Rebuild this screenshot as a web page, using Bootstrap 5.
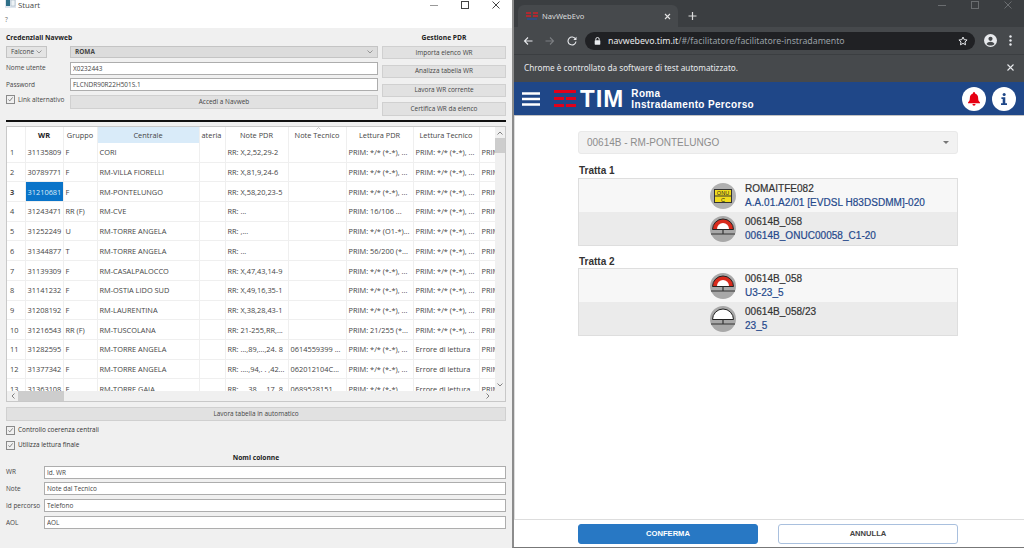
<!DOCTYPE html>
<html lang="it">
  <head>
    <meta charset="UTF-8" />
    <meta name="viewport" content="width=device-width, initial-scale=1.0" />
    <title>Stuart e NavWebEvo</title>

    <link
      rel="stylesheet"
      href="https://cdn.jsdelivr.net/npm/bootstrap@5.3.0/dist/css/bootstrap.min.css"
    />

    <style>
      html, body { height: 548px; overflow: hidden; }
      body { background: #fff; }
      .screen { width: 1024px; height: 548px; }

      /* Finestra Stuart (Qt) */
      .qt-win { width: 512px; height: 548px; font: 6.45px/10px "Open Sans", sans-serif; color: #333; background: #f0f0f0; }
      .qt-title { height: 10px; background: #fff; font-size: 7.8px; color: #444; padding-left: 18px; padding-right: 12px; }
      .qt-app-icon { margin-left: -13px; margin-right: 2px; margin-top: -3px; }
      .qt-winbtns { gap: 23px; }
      .qt-menu { height: 18px; background: #fff; padding-left: 5px; padding-top: 2px; color: #666; }
      .qt-body { padding: 5px 6px 0; }
      .qt-left { width: 372px; }
      .qt-right { width: 124px; margin-left: 4px; }
      .qt-head { height: 10px; font-size: 6.7px; font-weight: 700; color: #222; margin-bottom: 3px; }
      .qt-rows { gap: 3.6px; }
      .qt-label { width: 64px; flex: none; color: #444; }
      .qt-label-up { margin-top: -4px; }
      .qt-combo { height: 12px; background: #dcdcdc; border: 1px solid #c4c4c4; padding: 0 4px; color: #444; }
      .qt-combo-short { width: 41px; margin-right: 23px; background: #e4e4e4; }
      .qt-input.form-control { height: 13px; min-height: 0; padding: 0 2px; font: inherit; color: #444; border: 1px solid #adadad; border-radius: 0; background: #fff; box-shadow: none; }
      .qt-btn.btn { height: 14px; padding: 0; font: inherit; color: #444; background: #e1e1e1; border: 1px solid #d0d0d0; border-radius: 0; }
      .qt-btns { gap: 5.6px; margin-top: 1px; }
      .qt-btns .qt-btn.btn { height: 13.2px; }
      .qt-rule { height: 2px; background: #111; margin: 4px 0; }
      .qt-check.form-check-input { width: 9px; height: 9px; margin: 0 3px 0 0; border: 1px solid #8a8a8a; border-radius: 0; background-color: #f0f0f0; box-shadow: none; float: none; flex: none;
        background-image: url("data:image/svg+xml,%3csvg xmlns='http://www.w3.org/2000/svg' viewBox='0 0 10 10'%3e%3cpath fill='none' stroke='%23555' stroke-width='1' d='M2 5l2 2 4-5'/%3e%3c/svg%3e"); }

      /* Griglia WR */
      .grid-frame { height: 276px; border: 1px solid #c8c8c8; background: #fff; }
      .grid-view { height: 264px; overflow: hidden; }
      .wr-grid.table { width: 488px; table-layout: fixed; margin: 0; font: 7.4px/10px "Open Sans", sans-serif; --bs-table-bg: #fff; --bs-table-color: #444; }
      .wr-grid th, .wr-grid td { padding: 0 2px; white-space: nowrap; overflow: hidden; vertical-align: middle; border: 0; border-right: 1px solid #efefef; border-bottom: 1px solid #efefef; }
      .wr-grid thead th { height: 16px; font-weight: 400; text-align: center; border-bottom: 0; }
      .wr-grid tbody td, .wr-grid tbody th { height: 19.7px; }
      .wr-grid tbody th { font-weight: 400; padding-left: 3px; }
      .wr-grid .cell-sel { background: #0a74c9; --bs-table-bg: #0a74c9; --bs-table-color: #fff; color: #dcecf8; }
      .wr-grid thead .col-active { --bs-table-bg: #d9ebf9; background: #d9ebf9; }
      .wr-grid .row-current { font-weight: 700; }
      .wr-grid thead .col-key { font-weight: 700; color: #222; }
      .sort-mark { position: absolute; left: 309px; top: 0; }
      .c-h { width: 18px; } .c-wr { width: 38px; } .c-gr { width: 34px; } .c-ce { width: 102px; }
      .c-at { width: 26px; } .c-np { width: 63px; } .c-nt { width: 58px; } .c-lp { width: 67px; }
      .c-lt { width: 66px; } .c-pr { width: 16px; }
      .sb-v { width: 10px; background: #f0f0f0; color: #555; }
      .sb-thumb-v { height: 15px; margin-top: 3px; background: #cdcdcd; }
      .sb-h { height: 10px; background: #f0f0f0; }
      .sb-thumb-h { width: 46px; background: #cdcdcd; }
      .sb-left { width: 11px; }
      .sb-right { margin-right: 15px; }
      .qt-auto.btn { width: 100%; margin-top: 5px; margin-bottom: 2px; height: 14px; }
      .qt-optrow { height: 15px; }
      .qt-center-head { height: 10px; margin-top: 0; margin-bottom: 3px; font-size: 6.7px; font-weight: 700; color: #222; }
      .qt-fields { gap: 3.9px; }
      .qt-field-label { width: 38px; flex: none; color: #444; }

      /* Finestra Chrome */
      .cr-win { width: 512px; height: 548px; border-left: 2px solid #8c8c8c; border-bottom: 1px solid #777; background: #fff; font-family: "Liberation Sans", sans-serif; }
      .cr-strip { height: 27px; background: #3b3e41; padding: 5px 0 0 4px; color: #ddd; }
      .cr-tab { width: 160px; height: 22px; background: #46494c; border-radius: 6px 6px 0 0; padding: 0 7px 0 8px; font: 7.6px "Noto Sans", sans-serif; color: #dcdcdc; }
      .cr-plus { margin-left: 10px; margin-top: -1px; }
      .cr-ctrl { gap: 25px; margin-left: auto; margin-right: 12px; margin-top: -4px; }
      .cr-bar { height: 27px; background: #46494c; padding: 0 12px 0 9px; }
      .cr-nav { gap: 12px; width: 60px; }
      .cr-omni { flex: 1; height: 18px; margin: 0 9px 0 2px; background: #202124; border-radius: 9px; padding: 0 7px 0 9px; font: 8.75px "Noto Sans", sans-serif; color: #9aa0a6; }
      .cr-omni b { font-weight: 400; color: #e8eaed; }
      .cr-lock { margin-right: 7px; }
      .cr-tools { gap: 12px; margin-left: 0; }
      .cr-info { height: 28px; background: #46494c; border-top: 1px solid #3b3e41; padding: 0 10px 2px; font: 8.2px "Noto Sans", sans-serif; color: #e8eaed; }
      .tim-head { height: 34px; background: #1f4788; border-bottom: 1px solid #c2c2c2; padding: 0 8px 0 8px; color: #fff; }
      .tim-logo { margin-left: 14px; margin-right: 0; }
      .tim-word { font: 700 24px/1 "Liberation Sans", sans-serif; letter-spacing: 1px; margin-left: 4px; margin-right: 7px; }
      .tim-title { font: 700 10px/10.5px "Liberation Sans", sans-serif; letter-spacing: .35px; margin-top: 2px; }
      .tim-round { width: 24px; height: 24px; border-radius: 50%; background: #fff; margin-left: 6px; }
      .tim-main { flex: 1; padding: 15px 66px 0 63px; border-left: 1px solid #ddd; }
      .tim-select { height: 23px; background: #f2f2f2; border: 1px solid #e9e9e9; border-radius: 3px; padding: 0 8px; font-size: 10px; color: #8d8d8d; }
      .tim-caret { width: 0; height: 0; border: 3px solid transparent; border-top-color: #777; border-bottom: 0; }
      .tim-tratta { font-size: 10px; font-weight: 700; color: #333; height: 12px; line-height: 12px; margin: 11px 0 1px 1px; }
      .tim-tratta-2 { margin-top: 10px; margin-bottom: 0; }
      .tim-box { border: 1px solid #dedede; }
      .tim-row { height: 33px; padding-left: 131px; gap: 9px; background: #f7f7f7; font-size: 10px; line-height: 14px; color: #333; -webkit-text-stroke: .2px; letter-spacing: .04px; }
      .tim-row:nth-child(even) { background: #ebebeb; }
      .tim-link { color: #25498c; }
      .tim-foot { height: 28px; border-top: 1px solid #ddd; padding: 4px 64px 0 64px; gap: 20px; }
      .tim-btn.btn { width: 180px; height: 20px; padding: 0; font: 700 7.6px/1 "Liberation Sans", sans-serif; border-radius: 3px; }
      .tim-ok.btn { background: #2878c4; border: 1px solid #2878c4; color: #fff; }
      .tim-ko.btn { background: #fff; border: 1px solid #a9c0de; color: #444; }
    </style>
  </head>
  <body>
    <div class="screen d-flex">
      <!-- Stuart -->
      <div class="qt-win d-flex flex-column">
        <div class="qt-title d-flex align-items-center">
          <svg class="qt-app-icon" width="11" height="9" viewBox="0 0 11 9"><rect width="11" height="9" fill="#dfe6ee"/><rect x="1" y="0" width="4" height="7" fill="#2e6f88"/><rect x="6" y="1" width="4" height="6" fill="#eef3f6" stroke="#9ab" stroke-width=".5"/></svg>
          <span>Stuart</span>
          <div class="qt-winbtns d-flex align-items-center ms-auto">
            <svg width="8" height="8" viewBox="0 0 8 8"><path d="M0 4.500h8" stroke="#999" fill="none"/></svg>
            <svg width="8" height="8" viewBox="0 0 8 8"><rect x=".5" y=".5" width="7" height="7" stroke="#444" fill="none"/></svg>
            <svg width="8" height="8" viewBox="0 0 8 8"><path d="M.5.5l7 7M7.500.5l-7 7" stroke="#444" fill="none"/></svg>
          </div>
        </div>
        <div class="qt-menu d-flex align-items-center">?</div>
        <div class="qt-body flex-grow-1 d-flex flex-column">
          <div class="d-flex">
            <div class="qt-left">
              <div class="qt-head">Credenziali Navweb</div>
              <div class="qt-rows d-flex flex-column">
                <div class="d-flex">
                  <div class="qt-combo qt-combo-short d-flex align-items-center justify-content-between">Falcone
                    <svg width="6" height="4" viewBox="0 0 6 4"><path d="M.5.5L3 3 5.500.5" stroke="#777" fill="none" stroke-width=".7"/></svg>
                  </div>
                  <div class="qt-combo flex-grow-1 d-flex align-items-center justify-content-between fw-bold">ROMA
                    <svg width="6" height="4" viewBox="0 0 6 4"><path d="M.5.5L3 3 5.500.5" stroke="#777" fill="none" stroke-width=".7"/></svg>
                  </div>
                </div>
                <div class="d-flex align-items-center"><span class="qt-label">Nome utente</span><input class="form-control qt-input" type="text" value="X0232443" /></div>
                <div class="d-flex align-items-center"><span class="qt-label">Password</span><input class="form-control qt-input" type="text" value="FLCNDR90R22H501S.1" /></div>
                <div class="d-flex align-items-center">
                  <span class="qt-label qt-label-up d-flex align-items-center"><input class="form-check-input qt-check" type="checkbox" checked />Link alternativo</span>
                  <button class="btn qt-btn flex-grow-1" type="button">Accedi a Navweb</button>
                </div>
              </div>
            </div>
            <div class="qt-right">
              <div class="qt-head text-center">Gestione PDR</div>
              <div class="qt-btns d-flex flex-column">
                <button class="btn qt-btn" type="button">Importa elenco WR</button>
                <button class="btn qt-btn" type="button">Analizza tabella WR</button>
                <button class="btn qt-btn" type="button">Lavora WR corrente</button>
                <button class="btn qt-btn" type="button">Certifica WR da elenco</button>
              </div>
            </div>
          </div>
          <div class="qt-rule"></div>

          <div class="grid-frame d-flex flex-column">
            <div class="d-flex flex-grow-1">
              <div class="grid-view flex-grow-1 position-relative">
                <table class="table wr-grid">
                  <colgroup><col class="c-h" /><col class="c-wr" /><col class="c-gr" /><col class="c-ce" /><col class="c-at" /><col class="c-np" /><col class="c-nt" /><col class="c-lp" /><col class="c-lt" /><col class="c-pr" /></colgroup>
                  <thead>
                    <tr><th></th><th class="col-key">WR</th><th>Gruppo</th><th class="col-active">Centrale</th><th class="text-start">ateria</th><th>Note PDR</th><th>Note Tecnico</th><th>Lettura PDR</th><th>Lettura Tecnico</th><th></th></tr>
                  </thead>
                  <tbody id="righe"></tbody>
                </table>
                <svg class="sort-mark" width="5" height="3" viewBox="0 0 5 3"><path d="M.5 2.500L2.500.5l2 2" stroke="#aaa" fill="none" stroke-width=".6"/></svg>
              </div>
              <div class="sb-v d-flex flex-column align-items-center">
                <svg class="mt-1" width="6" height="4" viewBox="0 0 6 4"><path d="M.5 3.500L3 1l2.500 2.500" stroke="#666" fill="none" stroke-width=".8"/></svg>
                <div class="sb-thumb-v w-100"></div>
                <svg class="mt-auto mb-1" width="6" height="4" viewBox="0 0 6 4"><path d="M.5.5L3 3 5.500.5" stroke="#666" fill="none" stroke-width=".8"/></svg>
              </div>
            </div>
            <div class="sb-h d-flex align-items-stretch">
              <div class="sb-left d-flex align-items-center justify-content-center"><svg width="4" height="6" viewBox="0 0 4 6"><path d="M3.500.5L1 3l2.500 2.500" stroke="#666" fill="none" stroke-width=".8"/></svg></div>
              <div class="sb-thumb-h"></div>
              <div class="sb-right ms-auto d-flex align-items-center"><svg width="4" height="6" viewBox="0 0 4 6"><path d="M.5.5L3 3 .5 5.500" stroke="#666" fill="none" stroke-width=".8"/></svg></div>
            </div>
          </div>

          <button class="btn qt-btn qt-auto" type="button">Lavora tabella in automatico</button>
          <div class="qt-optrow d-flex align-items-center"><input class="form-check-input qt-check" type="checkbox" checked />Controllo coerenza centrali</div>
          <div class="qt-optrow d-flex align-items-center"><input class="form-check-input qt-check" type="checkbox" checked />Utilizza lettura finale</div>
          <div class="qt-center-head text-center">Nomi colonne</div>
          <div class="qt-fields d-flex flex-column">
            <div class="d-flex align-items-center"><span class="qt-field-label">WR</span><input class="form-control qt-input" type="text" value="Id. WR" /></div>
            <div class="d-flex align-items-center"><span class="qt-field-label">Note</span><input class="form-control qt-input" type="text" value="Note dal Tecnico" /></div>
            <div class="d-flex align-items-center"><span class="qt-field-label">Id percorso</span><input class="form-control qt-input" type="text" value="Telefono" /></div>
            <div class="d-flex align-items-center"><span class="qt-field-label">AOL</span><input class="form-control qt-input" type="text" value="AOL" /></div>
          </div>
        </div>
      </div>

      <!-- Chrome / NavWebEvo -->
      <div class="cr-win d-flex flex-column">
        <div class="cr-strip d-flex align-items-start">
          <div class="cr-tab d-flex align-items-center">
            <svg class="me-1" width="12" height="9" viewBox="0 0 12 9"><path d="M0 1h5M0 4h5M7 1h5M7 4h5" stroke="#d0202a" stroke-width="1.500"/><path d="M1 7h10" stroke="#2b4f91" stroke-width="1.500"/></svg>
            <span>NavWebEvo</span>
            <svg class="ms-auto" width="7" height="7" viewBox="0 0 7 7"><path d="M1 1l5 5M6 1L1 6" stroke="#e3e3e3" stroke-width="1.100"/></svg>
          </div>
          <svg class="cr-plus mt-1" width="9" height="14" viewBox="0 0 9 14"><path d="M4.500 3v8M.5 7h8" stroke="#dcdcdc" stroke-width="1.200"/></svg>
          <div class="cr-ctrl d-flex">
            <svg width="8" height="8" viewBox="0 0 8 8"><path d="M0 4.500h8" stroke="#6a6d70"/></svg>
            <svg width="8" height="8" viewBox="0 0 8 8"><rect x=".5" y=".5" width="7" height="7" stroke="#6a6d70" fill="none"/></svg>
            <svg width="8" height="8" viewBox="0 0 8 8"><path d="M.5.5l7 7M7.500.5l-7 7" stroke="#6a6d70"/></svg>
          </div>
        </div>
        <div class="cr-bar d-flex align-items-center">
          <div class="cr-nav d-flex align-items-center">
            <svg width="10" height="10" viewBox="0 0 10 10"><path d="M9.500 5H1.500M5 1.500L1.500 5 5 8.500" stroke="#e8eaed" fill="none" stroke-width="1.100"/></svg>
            <svg width="10" height="10" viewBox="0 0 10 10"><path d="M.5 5h8M5 1.500L8.500 5 5 8.500" stroke="#7b7e81" fill="none" stroke-width="1.100"/></svg>
            <svg width="10" height="10" viewBox="0 0 10 10"><path d="M8.500 3A4 4 0 1 0 9 5.500" stroke="#e8eaed" fill="none" stroke-width="1.100"/><path d="M9.500.8v3.200H6.300z" fill="#e8eaed"/></svg>
          </div>
          <div class="cr-omni d-flex align-items-center">
            <svg class="cr-lock" width="7" height="8" viewBox="0 0 7 8"><path d="M1.800 3.500V2.200a1.700 1.700 0 0 1 3.400 0v1.300" stroke="#e8eaed" fill="none"/><rect x=".7" y="3.300" width="5.600" height="4.400" rx=".6" fill="#e8eaed"/></svg>
            <span><b>navwebevo.tim.it</b>/#/facilitatore/facilitatore-instradamento</span>
            <svg class="ms-auto" width="10" height="10" viewBox="0 0 24 24"><path d="M12 2.500l2.900 6.300 6.900.8-5.100 4.700 1.400 6.800-6.100-3.400-6.100 3.400 1.400-6.800-5.100-4.700 6.900-.8z" fill="none" stroke="#e8eaed" stroke-width="2.400"/></svg>
          </div>
          <div class="cr-tools d-flex align-items-center">
            <svg width="13" height="13" viewBox="0 0 13 13"><circle cx="6.500" cy="6.500" r="6.500" fill="#e8eaed"/><circle cx="6.500" cy="4.800" r="2.100" fill="#46494c"/><path d="M2.500 10c.8-1.600 2.300-2.300 4-2.300s3.200.7 4 2.300c-1 1-2.400 1.600-4 1.600s-3-.6-4-1.600z" fill="#46494c"/></svg>
            <svg width="3" height="11" viewBox="0 0 3 11"><circle cx="1.500" cy="1.500" r="1.200" fill="#e8eaed"/><circle cx="1.500" cy="5.500" r="1.200" fill="#e8eaed"/><circle cx="1.500" cy="9.500" r="1.200" fill="#e8eaed"/></svg>
          </div>
        </div>
        <div class="cr-info d-flex align-items-center">
          <span>Chrome è controllato da software di test automatizzato.</span>
          <svg class="ms-auto" width="7" height="7" viewBox="0 0 7 7"><path d="M.5.5l6 6M6.500.5l-6 6" stroke="#e8eaed" stroke-width="1.100"/></svg>
        </div>
        <div class="tim-head d-flex align-items-center">
          <svg width="18" height="14" viewBox="0 0 18 14"><path d="M0 1.500h18M0 7h18M0 12.500h18" stroke="#fff" stroke-width="2.600"/></svg>
          <svg class="tim-logo" width="22" height="18" viewBox="0 0 22 18"><path d="M0 0h22v3H0zM0 7h10v3H0zM12 7h10v3H12zM0 14h10v3H0zM12 14h10v3H12z" fill="#e2001a"/></svg>
          <span class="tim-word">TIM</span>
          <div class="tim-title"><div>Roma</div><div>Instradamento Percorso</div></div>
          <div class="tim-round d-flex align-items-center justify-content-center ms-auto">
            <svg width="12" height="14" viewBox="0 0 13 15"><path d="M6.500 0a1.300 1.300 0 0 1 1.200 1.500C10 2.100 11 4 11 6.500c0 2.500.7 3.600 2 4.800V12H0v-.7c1.300-1.200 2-2.300 2-4.800C2 4 3 2.100 5.300 1.500A1.300 1.300 0 0 1 6.500 0zM4.800 13h3.400a1.700 1.700 0 0 1-3.400 0z" fill="#e60012"/></svg>
          </div>
          <div class="tim-round d-flex align-items-center justify-content-center">
            <svg width="6" height="12" viewBox="0 0 7 14"><circle cx="3.700" cy="1.800" r="1.800" fill="#1f4788"/><path d="M.5 5h4.500v7H7v2H0v-2h2V7H.5z" fill="#1f4788"/></svg>
          </div>
        </div>
        <div class="tim-main">
          <div class="tim-select d-flex align-items-center justify-content-between"><span>00614B - RM-PONTELUNGO</span><span class="tim-caret"></span></div>

          <div class="tim-tratta">Tratta 1</div>
          <div class="tim-box">
            <div class="tim-row d-flex align-items-center">
              <svg width="26" height="26" viewBox="0 0 26 26"><circle cx="13" cy="13" r="13" fill="#b0b0b0"/><rect x="4.500" y="6.500" width="17" height="13" fill="#f2dc1c" stroke="#333"/><path d="M4.500 13h17" stroke="#333"/><text x="13" y="12" text-anchor="middle" font-size="5.500" font-family="Liberation Sans" fill="#222" stroke="none">ONU</text><text x="13" y="18.500" text-anchor="middle" font-size="5.500" font-family="Liberation Sans" fill="#222" stroke="none">C</text></svg>
              <div><div>ROMAITFE082</div><div class="tim-link">A.A.01.A2/01 [EVDSL H83DSDMM]-020</div></div>
            </div>
            <div class="tim-row d-flex align-items-center">
              <svg width="26" height="26" viewBox="0 0 26 26"><circle cx="13" cy="13" r="13" fill="#a8a8a8"/><path d="M2.500 13.500a10.500 10.500 0 0 1 21 0z" fill="#d92a1c" stroke="#222"/><path d="M7 13a6 6 0 0 1 12 0z" fill="#fff"/><path d="M13 13.500v4.500M1 18h24" stroke="#333" stroke-width="1.200"/></svg>
              <div><div>00614B_058</div><div class="tim-link">00614B_ONUC00058_C1-20</div></div>
            </div>
          </div>

          <div class="tim-tratta tim-tratta-2">Tratta 2</div>
          <div class="tim-box">
            <div class="tim-row d-flex align-items-center">
              <svg width="26" height="26" viewBox="0 0 26 26"><circle cx="13" cy="13" r="13" fill="#a8a8a8"/><path d="M2.500 13.500a10.500 10.500 0 0 1 21 0z" fill="#d92a1c" stroke="#222"/><path d="M7 13a6 6 0 0 1 12 0z" fill="#fff"/><path d="M13 13.500v4.500M1 18h24" stroke="#333" stroke-width="1.200"/></svg>
              <div><div>00614B_058</div><div class="tim-link">U3-23_5</div></div>
            </div>
            <div class="tim-row d-flex align-items-center">
              <svg width="26" height="26" viewBox="0 0 26 26"><circle cx="13" cy="13" r="13" fill="#a8a8a8"/><path d="M2.500 13.500a10.500 10.500 0 0 1 21 0z" fill="#fff" stroke="#222"/><path d="M13 13.500v4.500M1 18h24" stroke="#333" stroke-width="1.200"/></svg>
              <div><div>00614B_058/23</div><div class="tim-link">23_5</div></div>
            </div>
          </div>
        </div>
        <div class="tim-foot d-flex">
          <button class="btn tim-btn tim-ok" type="button">CONFERMA</button>
          <button class="btn tim-btn tim-ko" type="button">ANNULLA</button>
        </div>
      </div>
    </div>

    <script src="https://cdn.jsdelivr.net/npm/bootstrap@5.3.0/dist/js/bootstrap.bundle.min.js"></script>

    <script>
      // righe della tabella WR
      const P = "PRIM: */* (*-*), ...";
      const righe = [
        ["31135809", "F", "CORI", "RR: X,2,52,29-2", "", P, P],
        ["30789771", "F", "RM-VILLA FIORELLI", "RR: X,81,9,24-6", "", P, P],
        ["31210681", "F", "RM-PONTELUNGO", "RR: X,58,20,23-5", "", P, P],
        ["31243471", "RR (F)", "RM-CVE", "RR: ...", "", "PRIM: 16/106 ...", P],
        ["31252249", "U", "RM-TORRE ANGELA", "RR: ,...", "", "PRIM: */* (O1-*)...", P],
        ["31344877", "T", "RM-TORRE ANGELA", "RR: ...", "", "PRIM: 56/200 (*...", P],
        ["31139309", "F", "RM-CASALPALOCCO", "RR: X,47,43,14-9", "", P, P],
        ["31141232", "F", "RM-OSTIA LIDO SUD", "RR: X,49,16,35-1", "", P, P],
        ["31208192", "F", "RM-LAURENTINA", "RR: X,38,28,43-1", "", P, P],
        ["31216543", "RR (F)", "RM-TUSCOLANA", "RR: 21-255,RR,...", "", "PRIM: 21/255 (*...", P],
        ["31282595", "F", "RM-TORRE ANGELA", "RR: ...,89,...,24. 8", "0614559399 ...", P, "Errore di lettura"],
        ["31377342", "F", "RM-TORRE ANGELA", "RR: ....,94,. . ,42...", "062012104C...", P, "Errore di lettura"],
        ["31363108", "F", "RM-TORRE GAIA", "RR: ...,38,...,17. 8", "0689528151", P, "Errore di lettura"],
      ];
      const corpo = document.getElementById("righe");
      righe.forEach((r, i) => {
        const tr = document.createElement("tr");
        const corrente = i === 2;
        const celle = [r[0], r[1], r[2], "", r[3], r[4], r[5], r[6], "PRIM"];
        let html = `<th class="${corrente ? "row-current" : ""}">${i + 1}</th>`;
        celle.forEach((c, j) => {
          html += `<td class="${corrente && j === 0 ? "cell-sel" : ""}">${c}</td>`;
        });
        tr.innerHTML = html;
        corpo.appendChild(tr);
      });
    </script>
  </body>
</html>
